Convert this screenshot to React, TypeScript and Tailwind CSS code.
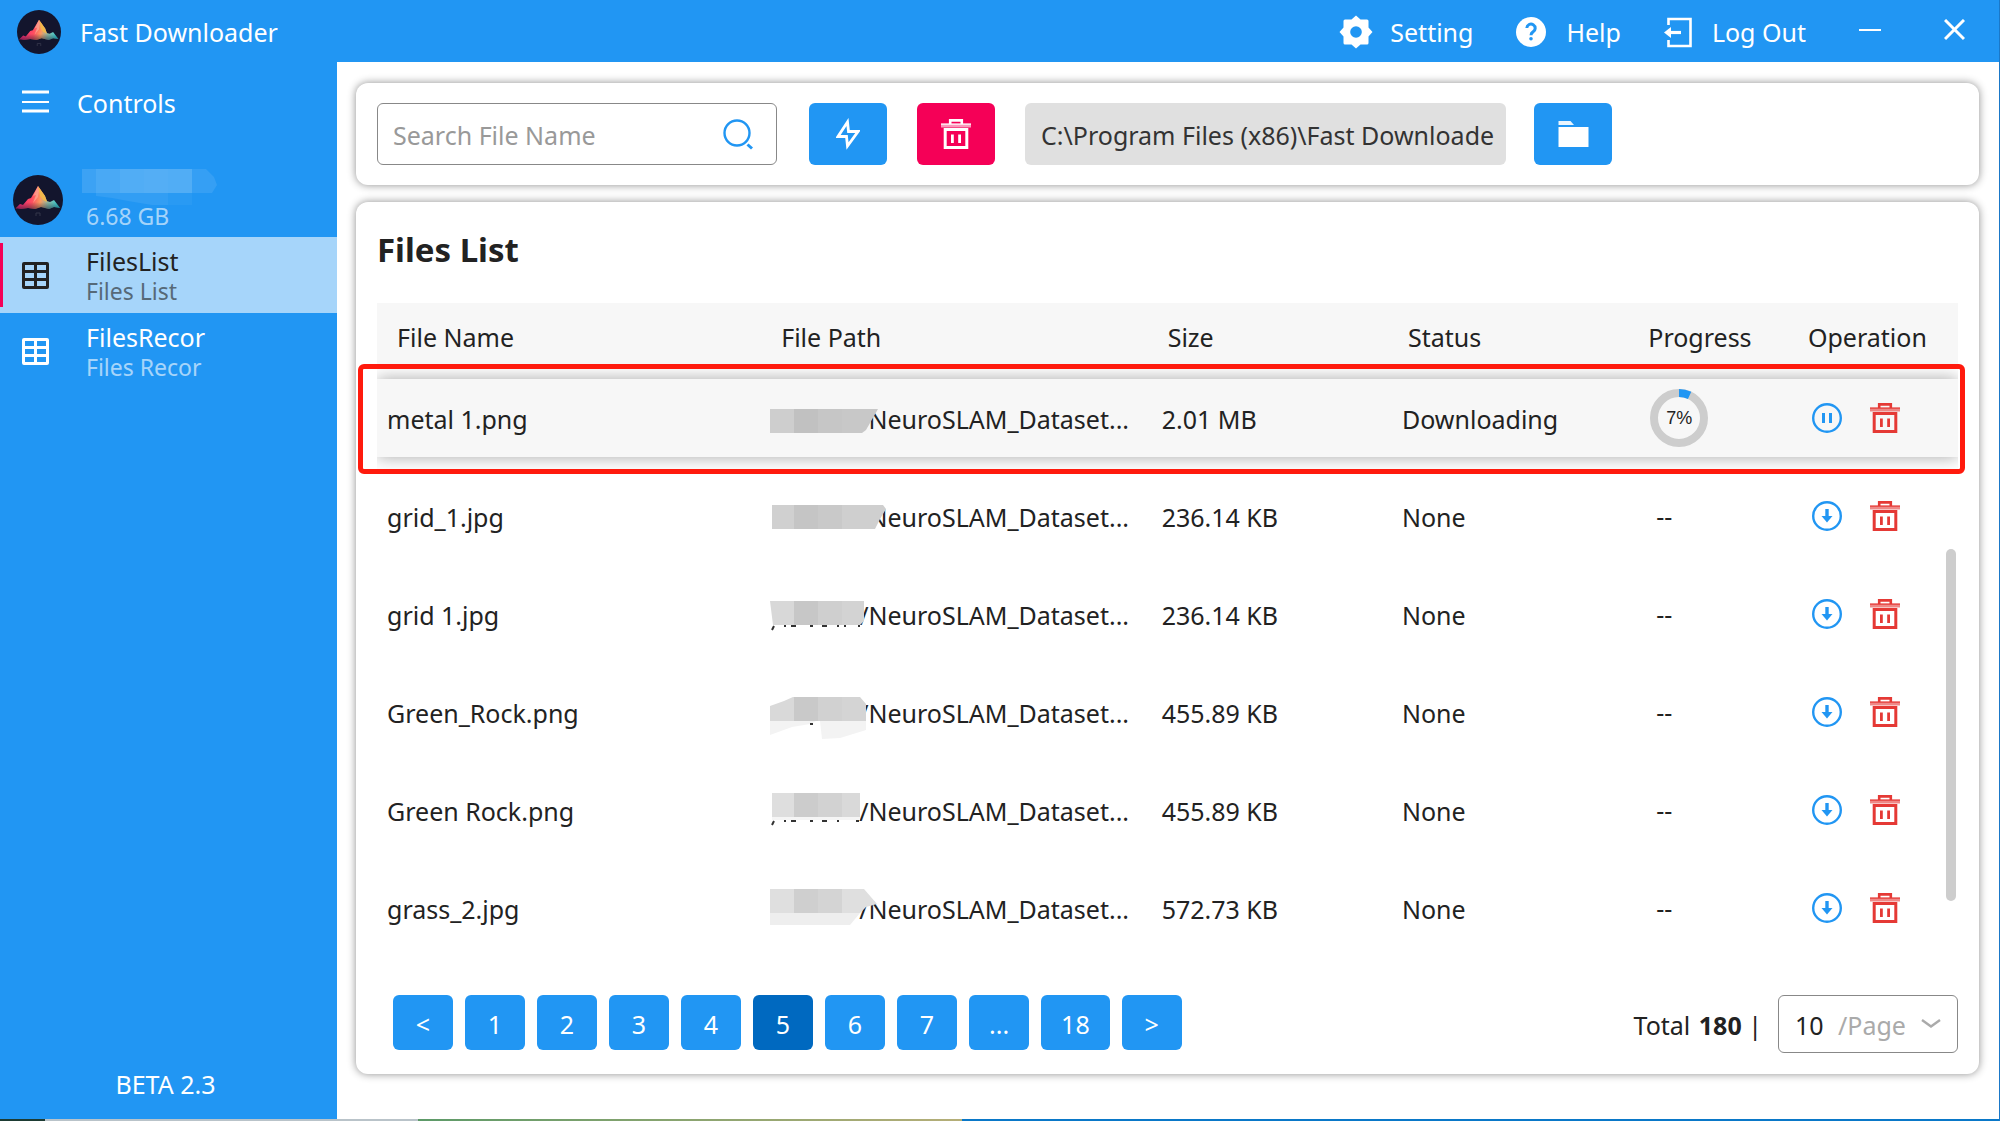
import type { ReactNode } from 'react'

interface FileRow {
  name: string
  path: string
  size: string
  status: string
  progress?: number
}

const FILES: FileRow[] = [
  { name: 'metal 1.png',    path: '/NeuroSLAM_Dataset...', size: '2.01 MB',   status: 'Downloading', progress: 7 },
  { name: 'grid_1.jpg',     path: '/NeuroSLAM_Dataset...', size: '236.14 KB', status: 'None' },
  { name: 'grid 1.jpg',     path: '/NeuroSLAM_Dataset...', size: '236.14 KB', status: 'None' },
  { name: 'Green_Rock.png', path: '/NeuroSLAM_Dataset...', size: '455.89 KB', status: 'None' },
  { name: 'Green Rock.png', path: '/NeuroSLAM_Dataset...', size: '455.89 KB', status: 'None' },
  { name: 'grass_2.jpg',    path: '/NeuroSLAM_Dataset...', size: '572.73 KB', status: 'None' },
]

const PAGES = ['<', '1', '2', '3', '4', '5', '6', '7', '...', '18', '>']

const MENU = [
  { title: 'FilesList', sub: 'Files List', active: true },
  { title: 'FilesRecor', sub: 'Files Recor', active: false },
]

/* Pixelated patches that hide the first part of each path: points + fill */
const MASKS: [string, string][][] = [
  [
    ['0,-9 24,-9 24,15 0,15', '#cecece'],
    ['24,-9 48,-9 48,15 24,15', '#c1c1c1'],
    ['48,-9 72,-9 72,15 48,15', '#c6c6c6'],
    ['72,-9 108,-9 96,12 92,15 72,15', '#c8c8c8'],
  ],
  [
    ['2,-11 24,-11 24,13 2,13', '#d0d0d0'],
    ['24,-11 48,-11 48,13 24,13', '#c5c5c5'],
    ['48,-11 72,-11 72,13 48,13', '#c9c9c9'],
    ['72,-11 113,-11 116,-7 110,3 105,13 72,13', '#cfcfcf'],
  ],
  [
    ['0,-13 24,-13 24,11 3,11', '#d8d8d8'],
    ['24,-13 48,-13 48,11 24,11', '#c7c7c7'],
    ['48,-13 72,-13 72,11 48,11', '#cfcfcf'],
    ['72,-13 94,-13 94,7 90,11 72,11', '#d3d3d3'],
  ],
  [
    ['0,-6 14,-11 23,-15 24,-15 24,9 0,9', '#d9d9d9'],
    ['24,-15 48,-15 48,9 24,9', '#c9c9c9'],
    ['48,-15 72,-15 72,9 48,9', '#d1d1d1'],
    ['72,-15 90,-15 96,-8 96,9 72,9', '#d4d4d4'],
    ['0,9 46,9 40,12 22,15 0,23', '#f3f3f3'],
    ['50,9 96,9 96,18 70,26 52,27', '#f3f3f3'],
  ],
  [
    ['2,-17 24,-17 24,7 2,7', '#dedede'],
    ['24,-17 48,-17 48,7 24,7', '#cccccc'],
    ['48,-17 72,-17 72,7 48,7', '#d2d2d2'],
    ['72,-17 90,-17 90,7 72,7', '#d9d9d9'],
    ['2,7 90,7 90,10 2,10', '#f5f5f5'],
  ],
  [
    ['0,-19 24,-19 24,5 0,5', '#dfdfdf'],
    ['24,-19 48,-19 48,5 24,5', '#cfcfcf'],
    ['48,-19 72,-19 72,5 48,5', '#d4d4d4'],
    ['72,-19 94,-19 107,-4 96,-1 90,5 72,5', '#dfdfdf'],
    ['0,5 90,5 80,17 0,17', '#eeeeee'],
  ],
]

/* Letter bottoms left visible under a patch */
const REMNANTS: Record<number, string> = {
  2: 'M4 12l-2 4M14 12h2M21 12h5M40 12h3M52 12h5M67 12h2M74 12h2M88 12h2',
  3: 'M40 12h3',
  4: 'M4 11l-2 4M14 11h2M21 11h5M40 11h3M52 11h5M67 11h2M86 11h3',
}

function PathMask({ index }: { index: number }) {
  return (
    <svg className="absolute -left-px top-0 h-[78px] w-[120px]" viewBox="0 -39 120 78" aria-hidden="true">
      {MASKS[index].map(([points, fill]) => (
        <polygon key={points} points={points} fill={fill} />
      ))}
      {REMNANTS[index] && <path d={REMNANTS[index]} stroke="#333" strokeWidth="2" />}
    </svg>
  )
}

function Logo({ id, className }: { id: string; className: string }) {
  return (
    <svg viewBox="0 0 50 50" className={className} aria-hidden="true">
      <defs>
        <linearGradient id={`${id}-peak`} x1="0" x2="1" y1="0.4" y2="0.5">
          <stop offset="0" stopColor="#f0187c" />
          <stop offset="0.4" stopColor="#ff4f60" />
          <stop offset="0.58" stopColor="#fb9a60" />
          <stop offset="0.75" stopColor="#8fb4a0" />
          <stop offset="1" stopColor="#2fd0d8" />
        </linearGradient>
        <linearGradient id={`${id}-fade`} x1="0" x2="0" y1="0" y2="1">
          <stop offset="0.7" stopColor="#13152d" stopOpacity="0" />
          <stop offset="1" stopColor="#13152d" stopOpacity="0.5" />
        </linearGradient>
      </defs>
      <circle cx="25" cy="25" r="25" fill="#13152d" />
      <path d="M2 34l5-5 3 1 5-6 3-1 7-12 7 10 2 5 3 1 4-2 3 4 3 4-6-1-5 2-8-2-6 2-7-1-7 1-5-1z" fill={`url(#${id}-peak)`} />
      <path d="M25 11l7 10 2 6-4-2-3-4z" fill="#f2b84b" />
      <path d="M25 11l-5 10 3-1-3 8 5-6 1-6z" fill="#fbb6a0" opacity="0.6" />
      <path d="M2 34l5-5 3 1 5-6 3-1 7-12 7 10 2 5 3 1 4-2 3 4 3 4-6-1-5 2-8-2-6 2-7-1-7 1-5-1z" fill={`url(#${id}-fade)`} />
      <path d="M23 41v-3h4v3" stroke="#34364a" fill="none" />
    </svg>
  )
}

function GridIcon() {
  return (
    <svg className="size-[27px]" viewBox="0 0 27 27" fill="none" stroke="currentColor" strokeWidth="3" aria-hidden="true">
      <rect x="1.5" y="1.5" width="24" height="24" rx="0.5" />
      <path d="M1 9.500h25M1 17.500h25M13.500 1v25" />
    </svg>
  )
}

function TrashIcon() {
  return (
    <svg className="size-[30px]" viewBox="0 0 30 30" fill="none" stroke="currentColor" aria-hidden="true">
      <path d="M9.200 5V1.400h11.600V5" strokeWidth="2.600" />
      <path d="M0 6.500h30" strokeWidth="4" opacity="0.6" />
      <path d="M0 5.200h30" strokeWidth="1.600" opacity="0.7" />
      <path d="M4.200 10.400h21.600v18.100H4.200z" strokeWidth="3" />
      <path d="M11.400 15.500v8.500M18.600 15.500v8.500" strokeWidth="2.800" />
    </svg>
  )
}

function RoundIcon({ children }: { children: ReactNode }) {
  return (
    <svg className="size-[30px]" viewBox="0 0 30 30" fill="none" stroke="currentColor" aria-hidden="true">
      <circle cx="15" cy="15" r="13.800" strokeWidth="2.400" />
      {children}
    </svg>
  )
}

function ProgressRing({ value }: { value: number }) {
  return (
    <span className="relative -ml-0.5 flex size-[58px] items-center justify-center">
      <svg className="absolute inset-0 size-full -rotate-90" viewBox="0 0 58 58" fill="none" strokeWidth="8" aria-hidden="true">
        <circle cx="29" cy="29" r="25" stroke="#cdcdcd" />
        <circle cx="29" cy="29" r="25" stroke="#2196f3" pathLength="100" strokeDasharray={`${value} 100`} />
      </svg>
      <span className="relative font-['Liberation_Sans',sans-serif] text-[18px]">{value}%</span>
    </span>
  )
}

function Header() {
  return (
    <header className="flex h-[62px] items-center bg-[#2196f3] pl-[17px] pr-[34px] text-white">
      <div className="flex items-center gap-[19px] pt-0.5">
        <Logo id="head" className="size-11" />
        <span>Fast Downloader</span>
      </div>
      <nav className="ml-auto flex items-center gap-[43px] pt-0.5">
        <a href="#setting" className="flex items-center gap-[17px]">
          <svg className="size-[34px]" viewBox="0 0 34 34" aria-hidden="true">
            <path
              d="M17 0.500l4.500 4H28a1.500 1.500 0 0 1 1.500 1.500v6.500l4 4.500-4 4.500V28a1.500 1.500 0 0 1-1.500 1.500h-6.500l-4.500 4-4.500-4H6A1.500 1.500 0 0 1 4.500 28v-6.500L0.500 17l4-4.500V6A1.500 1.500 0 0 1 6 4.500h6.500z"
              fill="currentColor"
            />
            <circle cx="17" cy="17" r="5.800" fill="#2196f3" />
          </svg>
          Setting
        </a>
        <a href="#help" className="flex items-center gap-5">
          <svg className="size-[30px]" viewBox="0 0 30 30" fill="none" aria-hidden="true">
            <circle cx="15" cy="15" r="15" fill="currentColor" />
            <path d="M10.800 11a4.200 4.200 0 1 1 6.200 3.900c-1.500 0.900-2 1.500-2 3.300" stroke="#2196f3" strokeWidth="3" />
            <circle cx="15" cy="21.800" r="1.800" fill="#2196f3" />
          </svg>
          Help
        </a>
        <a href="#logout" className="flex items-center gap-[17px]">
          <svg className="size-[31px]" viewBox="0 0 31 31" fill="none" stroke="currentColor" strokeWidth="2.600" aria-hidden="true">
            <path d="M4.500 8V2H26.500v27H4.500v-6" />
            <path d="M17 15.500H4" strokeWidth="3.200" />
            <path d="M0 15.500l7-5.500v11z" fill="currentColor" stroke="none" />
          </svg>
          Log Out
        </a>
      </nav>
      <div className="ml-[52px] flex items-center gap-[62px]">
        <button type="button" aria-label="Minimize">
          <svg className="h-6 w-6" viewBox="0 0 24 24" stroke="currentColor" strokeWidth="2" aria-hidden="true">
            <path d="M1 11h22" />
          </svg>
        </button>
        <button type="button" aria-label="Close">
          <svg className="h-6 w-[21px]" viewBox="0 0 21 24" stroke="currentColor" strokeWidth="3" aria-hidden="true">
            <path d="M1 1l19 19M20 1L1 20" />
          </svg>
        </button>
      </div>
    </header>
  )
}

function Sidebar() {
  return (
    <aside className="flex w-[337px] shrink-0 flex-col bg-[#2196f3] text-white">
      <button type="button" className="flex h-20 items-center gap-7 pl-[22px]">
        <svg className="h-6 w-[27px]" viewBox="0 0 27 24" stroke="currentColor" strokeWidth="3" aria-hidden="true">
          <path d="M0 2h27M0 21h27" />
          <path d="M0 12h27" strokeWidth="2" />
        </svg>
        <span className="pt-0.5">Controls</span>
      </button>

      <div className="mt-5 flex h-[75px] items-center pl-[13px]">
        <Logo id="user" className="size-[50px]" />
        <div className="ml-[19px] flex flex-col">
          <svg className="h-[36px] w-[136px]" viewBox="0 0 136 36" fill="#fff" aria-hidden="true">
            <path d="M0 0h14v24H0z" opacity="0.12" />
            <path d="M14 0h24v24H14z" opacity="0.18" />
            <path d="M38 0h72v24H38z" opacity="0.22" />
            <path d="M62 0h24v24H62z" opacity="0.02" />
            <path d="M110 0h14l8 8 3 8-5 8h-20z" opacity="0.09" />
            <path d="M14 24h72v12H70l-24-4-16-3-16-2z" opacity="0.08" />
            <path d="M86 24h24v12H86z" opacity="0.04" />
          </svg>
          <span className="-mt-1 pl-1 text-[23px] leading-[30px] text-white/60">6.68 GB</span>
        </div>
      </div>

      <nav>
        {MENU.map(({ title, sub, active }) => (
          <a
            key={title}
            href={`#${title}`}
            className={`relative flex h-[76px] items-center gap-[37px] pl-[22px] leading-[30px] ${
              active ? 'bg-[#a6d5fa] text-[#222]' : 'text-white'
            }`}
          >
            {active && <span className="absolute inset-y-[6px] left-0 w-[3px] bg-[#f50057]" />}
            <GridIcon />
            <span className="flex flex-col pt-0.5">
              <span>{title}</span>
              <span className="text-[23px] opacity-60">{sub}</span>
            </span>
          </a>
        ))}
      </nav>

      <div className="mt-auto pb-[19px] pr-[6px] text-center">BETA 2.3</div>
    </aside>
  )
}

function Toolbar() {
  return (
    <section className="flex h-[102px] items-center rounded-xl bg-white px-[21px] shadow-[0_0_9px_rgba(0,0,0,0.45)]">
      <label className="flex h-[62px] w-[400px] items-center rounded-md border border-[#888] pl-[15px] pr-[22px]">
        <input
          type="text"
          aria-label="Search File Name"
          placeholder="Search File Name"
          className="min-w-0 flex-1 pt-0.5 outline-none placeholder:text-[#999]"
        />
        <svg className="size-8" viewBox="0 0 32 32" fill="none" stroke="#2196f3" aria-hidden="true">
          <circle cx="15" cy="15" r="12.500" strokeWidth="2.400" />
          <path d="M25.500 26.500l4.500 4" strokeWidth="3" />
        </svg>
      </label>
      <button type="button" aria-label="Start all" className="ml-8 flex h-[62px] w-[78px] items-center justify-center rounded-md bg-[#2196f3] text-white">
        <svg className="h-8 w-6" viewBox="0 0 24 32" fill="none" stroke="currentColor" strokeWidth="2.800" aria-hidden="true">
          <path d="M11.500 4L2 18.500h8.500l1 9.500L22 13.500h-9.500z" />
        </svg>
      </button>
      <button type="button" aria-label="Delete all" className="ml-[30px] flex h-[62px] w-[78px] items-center justify-center rounded-md bg-[#f50057] text-white">
        <TrashIcon />
      </button>
      <input
        type="text"
        readOnly
        aria-label="Download folder"
        value="C:\Program Files (x86)\Fast Downloade"
        className="ml-[30px] h-[62px] w-[481px] rounded-md bg-[#e0e0e0] pl-4 pt-0.5 text-[#333] outline-none"
      />
      <button type="button" aria-label="Open folder" className="ml-7 flex h-[62px] w-[78px] items-center justify-center rounded-md bg-[#2196f3] text-white">
        <svg className="h-[26px] w-[31px]" viewBox="0 0 31 26" fill="currentColor" aria-hidden="true">
          <path d="M0.500 0h12l3.500 4H0.500z" opacity="0.9" />
          <path d="M0.500 6h30v20h-30z" />
        </svg>
      </button>
    </section>
  )
}

function FilesTable() {
  return (
    <div className="relative mt-[29px] flex-1">
      <div className="overflow-hidden">
        <table className="w-full table-fixed border-separate border-spacing-0 text-left">
          <colgroup>
            <col className="w-[24.3%]" />
            <col className="w-[24.7%]" />
            <col className="w-[15.2%]" />
            <col className="w-[15.2%]" />
            <col className="w-[10.1%]" />
            <col className="w-[10.5%]" />
          </colgroup>
          <thead>
            <tr className="h-[66px] bg-[#f7f7f7]">
              <th className="pl-5 pt-0.5 font-normal">File Name</th>
              <th className="pl-5 pt-0.5 font-normal">File Path</th>
              <th className="pl-4 pt-0.5 font-normal">Size</th>
              <th className="pl-4 pt-0.5 font-normal">Status</th>
              <th className="pl-4 pt-0.5 font-normal">Progress</th>
              <th className="pl-4 pt-0.5 font-normal">Operation</th>
            </tr>
          </thead>
          <tbody>
            {FILES.map((file, i) => (
              <tr key={file.name} className="relative isolate h-[98px]">
                <td className="pl-[10px] pt-0.5">
                  {file.progress !== undefined && (
                    <span className="absolute inset-x-0 inset-y-[10px] -z-10 bg-[#f7f7f7] shadow-[0_0_16px_rgba(0,0,0,0.35)]" />
                  )}
                  {file.name}
                </td>
                <td className="pl-[10px]">
                  <div className="relative flex h-[78px] items-center pl-[88px] pt-0.5">
                    {file.path}
                    <PathMask index={i} />
                  </div>
                </td>
                <td className="pl-[10px] pt-0.5">{file.size}</td>
                <td className="pl-[10px] pt-0.5">{file.status}</td>
                <td className="pl-5">
                  {file.progress !== undefined ? <ProgressRing value={file.progress} /> : <span className="pl-1">--</span>}
                </td>
                <td className="pl-5">
                  <div className="flex items-center gap-7">
                    <button type="button" aria-label={file.progress !== undefined ? 'Pause' : 'Download'} className="text-[#2196f3]">
                      <RoundIcon>
                        {file.progress !== undefined ? (
                          <path d="M11.500 10v10M18.500 10v10" strokeWidth="3" />
                        ) : (
                          <>
                            <path d="M15 8v9" strokeWidth="3.400" />
                            <path d="M9.500 15h11L15 21.500z" fill="currentColor" stroke="none" />
                          </>
                        )}
                      </RoundIcon>
                    </button>
                    <button type="button" aria-label="Delete" className="text-[#e53935]">
                      <TrashIcon />
                    </button>
                  </div>
                </td>
              </tr>
            ))}
          </tbody>
        </table>
      </div>
      {/* Active download marker */}
      <div className="pointer-events-none absolute -left-[19px] -right-[7px] top-[61px] h-[110px] rounded-md border-[5px] border-[#ff1a0d]" />
      <div className="absolute right-[2px] top-[246px] h-[352px] w-[10px] rounded-full bg-[#cdcdcd]" />
    </div>
  )
}

function Pager() {
  return (
    <footer className="flex items-start justify-between pl-4">
      <nav className="flex gap-3">
        {PAGES.map(page => (
          <button
            key={page}
            type="button"
            className={`h-[55px] min-w-[60px] rounded-md px-5 pt-0.5 text-white ${page === '5' ? 'bg-[#0069c0]' : 'bg-[#2196f3]'}`}
          >
            {page}
          </button>
        ))}
      </nav>
      <div className="flex items-center gap-4">
        <span className="pt-0.5">Total <b className="pl-0.5">180</b> |</span>
        <label className="flex h-[58px] w-[180px] items-center rounded-md border border-[#888] pl-4 pr-4">
          <select aria-label="Rows per page" defaultValue="10" className="w-[43px] appearance-none pt-0.5 outline-none">
            <option>10</option>
            <option>20</option>
            <option>50</option>
          </select>
          <span className="pt-0.5 text-[#aaa]">/Page</span>
          <svg className="ml-auto h-3 w-5" viewBox="0 0 20 12" fill="none" stroke="#aaa" strokeWidth="2.400" aria-hidden="true">
            <path d="M1 2l9 6.500L19 2" />
          </svg>
        </label>
      </div>
    </footer>
  )
}

export default function App() {
  return (
    <div className="flex min-h-screen flex-col border-r border-[#1a78c8] bg-white font-['Noto_Sans',sans-serif] text-[25px] leading-8 text-[#222]">
      <Header />
      <div className="flex flex-1">
        <Sidebar />
        <main className="flex min-w-0 flex-1 flex-col gap-[17px] pb-[45px] pl-[19px] pr-5 pt-[21px]">
          <Toolbar />
          <section className="flex flex-1 flex-col rounded-xl bg-white px-[21px] pb-[21px] pt-[24px] shadow-[0_0_9px_rgba(0,0,0,0.45)]">
            <h1 className="text-[33px] font-bold leading-[48px]">Files List</h1>
            <FilesTable />
            <Pager />
          </section>
        </main>
      </div>
      <div className="flex h-[2px]">
        <div className="w-[45px] bg-[#1d3b33]" />
        <div className="w-[373px] bg-[#b9c3c9]" />
        <div className="w-[544px] bg-linear-to-r from-[#5c9a68] to-[#b5ae78]" />
        <div className="flex-1 bg-[#0a78c8]" />
      </div>
    </div>
  )
}
